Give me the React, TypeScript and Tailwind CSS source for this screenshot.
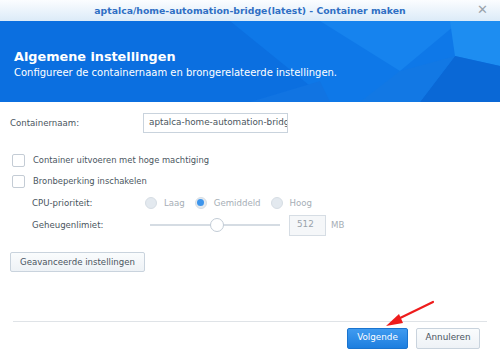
import React from 'react';

const font = "font-['DejaVu_Sans',Verdana,sans-serif]";

const Checkbox: React.FC<{ label: string }> = ({ label }) => (
  <label className="flex items-center gap-[8px] h-[21px]">
    <span className="w-[13px] h-[13px] border border-[#c4ccd5] bg-white rounded-[2px]" />
    <span className="text-[8.4px] text-[#4a5560]">{label}</span>
  </label>
);

const Radio: React.FC<{ label: string; checked?: boolean }> = ({ label, checked }) => (
  <div className="flex items-center gap-[7px] mr-[10px]">
    <span className="w-[12px] h-[12px] rounded-full bg-[#e3e9ef] border border-[#d6dde4] flex items-center justify-center">
      {checked && <span className="w-[7px] h-[7px] rounded-full bg-[#3d95ec]" />}
    </span>
    <span className="text-[8.6px] text-[#a6aeb6]">{label}</span>
  </div>
);

const App: React.FC = () => {
  return (
    <div className={`w-[500px] h-[355px] bg-white flex flex-col overflow-hidden relative ${font}`}>
      {/* title bar */}
      <div className="h-[21px] bg-gradient-to-b from-[#fbfdff] to-[#dcebf8] flex items-center justify-center relative">
        <span className="text-[9.3px] font-bold text-[#2f6fc4]">aptalca/home-automation-bridge(latest) - Container maken</span>
        <span className="absolute right-[12px] top-[3px] text-[13px] text-[#9aa3ab] leading-none">✕</span>
      </div>

      {/* header */}
      <div className="h-[81px] bg-[#0b6fe0] relative overflow-hidden flex flex-col justify-center px-[14px]">
        <svg className="absolute inset-0" width="500" height="81" viewBox="0 0 500 81">
          <polygon points="230,0 500,0 500,81 330,81" fill="#0e78e8" />
          <polygon points="320,0 460,0 400,50" fill="#1683ee" />
          <polygon points="450,0 500,0 500,45 455,35" fill="#1d8df1" />
          <polygon points="455,35 500,45 500,81 420,81" fill="#0a68d6" />
          <polygon points="400,50 455,35 420,81 360,81" fill="#1278e4" />
          <polygon points="250,81 330,81 320,60" fill="#1174e2" />
        </svg>
        <div className="relative mt-[4px]">
          <div className="text-[12.8px] font-bold text-white leading-[18px]">Algemene instellingen</div>
          <div className="text-[10px] text-white leading-[14px]">Configureer de containernaam en brongerelateerde instellingen.</div>
        </div>
      </div>

      {/* body */}
      <div className="flex-1 flex flex-col px-[10px] pt-[11px]">
        <div className="flex items-center h-[20px]">
          <span className="w-[133px] text-[8.6px] text-[#4a5560]">Containernaam:</span>
          <div className="w-[145px] h-[20px] border border-[#c9d3dd] flex items-center px-[5px] overflow-hidden whitespace-nowrap">
            <span className="text-[8.8px] text-[#4a5560]">aptalca-home-automation-bridg</span>
          </div>
        </div>

        <div className="mt-[17px] pl-[2px] flex flex-col">
          <Checkbox label="Container uitvoeren met hoge machtiging" />
          <Checkbox label="Bronbeperking inschakelen" />
        </div>

        <div className="pl-[22px] flex flex-col">
          <div className="flex items-center h-[22px]">
            <span className="w-[113px] text-[8.6px] text-[#4a5560]">CPU-prioriteit:</span>
            <Radio label="Laag" />
            <Radio label="Gemiddeld" checked />
            <Radio label="Hoog" />
          </div>
          <div className="flex items-center h-[22px]">
            <span className="w-[118px] text-[8.6px] text-[#4a5560]">Geheugenlimiet:</span>
            <div className="w-[130px] h-[14px] relative flex items-center">
              <div className="w-full h-[2px] bg-[#d5dce3]" />
              <span className="absolute left-[60px] w-[14px] h-[14px] rounded-full bg-white border border-[#c2ccd6]" />
            </div>
            <div className="ml-[9px] w-[37px] h-[21px] border border-[#d6dde4] bg-[#f5f7f9] flex items-center px-[7px]">
              <span className="text-[8.8px] text-[#9aa3ab]">512</span>
            </div>
            <span className="ml-[5px] text-[8.6px] text-[#a6aeb6]">MB</span>
          </div>
        </div>

        <div className="mt-[12px]">
          <button className="h-[20px] px-[9px] border border-[#c9d3dd] rounded-[2px] bg-gradient-to-b from-[#fafcfd] to-[#eef2f6] text-[8.6px] text-[#4a5560]">
            Geavanceerde instellingen
          </button>
        </div>

        <div className="flex-1" />
        <div className="h-[1px] bg-[#dfe3e7] mr-[3px] ml-[3px]" />
        <div className="h-[33px] flex items-center justify-end gap-[8px] pr-[10px] pb-[1px]">
          <button className="w-[61px] h-[21px] rounded-[2px] bg-gradient-to-b from-[#3f9bf0] to-[#1c7edf] border border-[#1a74cf] text-[8.8px] text-white">
            Volgende
          </button>
          <button className="w-[64px] h-[21px] rounded-[2px] border border-[#c9d3dd] bg-gradient-to-b from-[#fafcfd] to-[#eef2f6] text-[8.8px] text-[#4a5560]">
            Annuleren
          </button>
        </div>
      </div>

      {/* red arrow annotation */}
      <svg className="absolute left-0 top-0 pointer-events-none" width="500" height="355">
        <line x1="433" y1="302" x2="396" y2="320" stroke="#ee1c1c" strokeWidth="2.2" strokeLinecap="round" />
        <polygon points="386,326 399,314 403,323" fill="#ee1c1c" />
      </svg>
    </div>
  );
};

export default App;
